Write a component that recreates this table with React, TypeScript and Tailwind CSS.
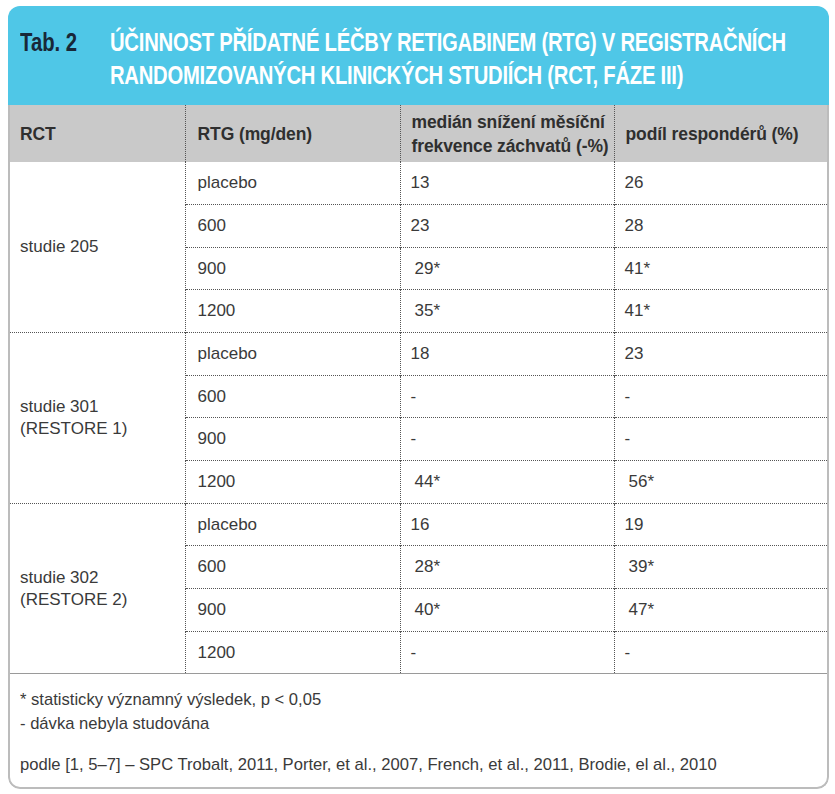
const rows: { group: string[]; items: [string, string, string][] }[] = [
  {
    group: ['studie 205'],
    items: [
      ['placebo', '13', '26'],
      ['600', '23', '28'],
      ['900', ' 29*', '41*'],
      ['1200', ' 35*', '41*'],
    ],
  },
  {
    group: ['studie 301', '(RESTORE 1)'],
    items: [
      ['placebo', '18', '23'],
      ['600', '-', '-'],
      ['900', '-', '-'],
      ['1200', ' 44*', ' 56*'],
    ],
  },
  {
    group: ['studie 302', '(RESTORE 2)'],
    items: [
      ['placebo', '16', '19'],
      ['600', ' 28*', ' 39*'],
      ['900', ' 40*', ' 47*'],
      ['1200', '-', '-'],
    ],
  },
]

// leading space in the data = the small indent seen in the print
function Val({ v }: { v: string }) {
  if (v.startsWith(' ')) return <span className="pl-[4px]">{v.trim()}</span>
  return <span>{v}</span>
}

export default function App() {
  return (
    <div className="w-[835px] h-[794px] bg-white pt-[6px] pl-[8px]">
      <div className="w-[821px] rounded-[12px] overflow-hidden">
        {/* title bar */}
        <div className="bg-[#4fc7e7] h-[99px] flex pl-[12px] pt-[20px] whitespace-nowrap" style={{ fontFamily: '"Liberation Sans", Arial, sans-serif' }}>
          <div className="w-[90px] shrink-0 text-[#182838] font-bold text-[26px] leading-[33px] scale-x-[0.78] origin-left">Tab. 2</div>
          <div className="text-white font-bold text-[26px] leading-[33px] tracking-[-0.3px] scale-x-[0.778] origin-left">
            <div>ÚČINNOST PŘÍDATNÉ LÉČBY RETIGABINEM (RTG) V REGISTRAČNÍCH</div>
            <div>RANDOMIZOVANÝCH KLINICKÝCH STUDIÍCH (RCT, FÁZE III)</div>
          </div>
        </div>

        <div className="border-x-2 border-b-2 border-[#bcbcbc] rounded-b-[12px] text-[#3a3a3a]" style={{ fontFamily: '"Liberation Sans", Arial, sans-serif' }}>
          <table className="w-full border-collapse table-fixed">
            <colgroup>
              <col className="w-[175px]" />
              <col className="w-[215px]" />
              <col className="w-[214px]" />
              <col />
            </colgroup>
            <thead>
              <tr className="bg-[#c9c9c9] h-[57px] text-[17.5px] font-bold leading-[24px] text-[#2f2f2f] tracking-[-0.1px]">
                <th className="text-left font-bold pl-[10px] border-r border-dotted border-[#555]">RCT</th>
                <th className="text-left font-bold pl-[12px] border-r border-dotted border-[#555]">RTG (mg/den)</th>
                <th className="text-left font-bold pl-[11px] border-r border-dotted border-[#555]">
                  medián snížení měsíční
                  <br />
                  frekvence záchvatů (-%)
                </th>
                <th className="text-left font-bold pl-[11px]">podíl respondérů (%)</th>
              </tr>
            </thead>
            <tbody className="text-[17px] leading-[22px]">
              {rows.map((g, gi) =>
                g.items.map((it, i) => (
                  <tr
                    key={gi + '-' + i}
                    className={
                      'h-[42.67px] ' +
                      (i < 3
                        ? 'border-b border-dotted border-[#555]'
                        : gi < 2
                          ? 'border-b border-dotted border-[#555]'
                          : 'border-b border-solid border-[#9a9a9a]')
                    }
                  >
                    {i === 0 && (
                      <td rowSpan={4} className="align-middle pl-[10px] border-r border-dotted border-[#555]">
                        {g.group.map((l) => (
                          <div key={l}>{l}</div>
                        ))}
                      </td>
                    )}
                    <td className="pl-[12px] border-r border-dotted border-[#555]">{it[0]}</td>
                    <td className="pl-[10px] border-r border-dotted border-[#555]">
                      <Val v={it[1]} />
                    </td>
                    <td className="pl-[10px]">
                      <Val v={it[2]} />
                    </td>
                  </tr>
                )),
              )}
            </tbody>
          </table>

          <div className="pl-[10px] pt-[14px] pb-[10px] text-[16.6px] leading-[24px]">
            <div>* statisticky významný výsledek, p &lt; 0,05</div>
            <div>- dávka nebyla studována</div>
            <div className="mt-[17px]">podle [1, 5–7] – SPC Trobalt, 2011, Porter, et al., 2007, French, et al., 2011, Brodie, el al., 2010</div>
          </div>
        </div>
      </div>
    </div>
  )
}
